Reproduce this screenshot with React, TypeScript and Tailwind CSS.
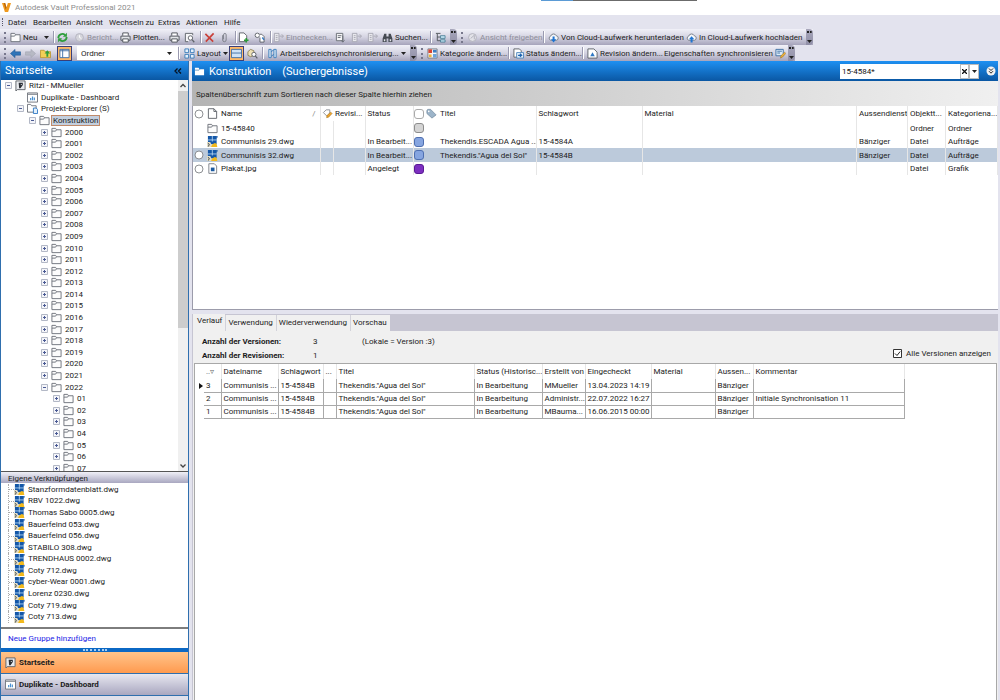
import type { ReactNode } from 'react';
import clsx from 'clsx';

type IconProps = { name: string; className?: string };

const shapes: Record<string, ReactNode> = {
  folder: (
    <>
      <path d="M1 3.500V1.500h4l1 1.500h5v7.500H1z" fill="#fcfcfc" stroke="#6b7078" />
      <path d="M1 4.500h4l1-1.500" fill="none" stroke="#6b7078" />
    </>
  ),
  folderWhite: (
    <>
      <path d="M1 10V2h4l1 1.500h5V10z" fill="#fff" />
      <path d="M1 4.500h4.500l1-1" fill="none" stroke="#4a7fae" strokeWidth=".8" />
    </>
  ),
  refresh: (
    <>
      <path d="M1.500 6.500a4.300 4.300 0 0 1 7.200-3.200M10.500 5.500a4.300 4.300 0 0 1-7.200 3.200" fill="none" stroke="#2f9e3c" strokeWidth="2" />
      <path d="M10.800.8v4.400H6.400zM1.200 11.200V6.800h4.400z" fill="#2f9e3c" />
    </>
  ),
  clock: (
    <>
      <circle cx="6" cy="6" r="4.300" fill="#d5d5dc" stroke="#b4b4be" />
      <path d="M6 3.500V6l2 1" fill="none" stroke="#fff" />
    </>
  ),
  printer: (
    <>
      <path d="M3 4V1h6v3" fill="#fff" stroke="#4d5158" />
      <path d="M3 9H1V4.500h10V9H9" fill="#e4e6ea" stroke="#4d5158" />
      <path d="M3 7.500h6V11H3z" fill="#fff" stroke="#4d5158" />
    </>
  ),
  preview: (
    <>
      <path d="M9.500 3.500v-2h-8v9h3" fill="#f6f6f8" stroke="#5d6168" />
      <circle cx="7" cy="6.500" r="2.400" fill="#fff" stroke="#5d6168" />
      <path d="M8.800 8.300l2.400 2.900" stroke="#5d6168" strokeWidth="1.400" />
    </>
  ),
  cross: <path d="M1.500 2l8.500 8.500M10.500 1.500L2 10.500" stroke="#c9403a" strokeWidth="1.800" fill="none" />,
  clip: (
    <path d="M4 3.500v5.200a1.900 1.900 0 0 0 3.800 0V3a1.400 1.400 0 0 0-2.800 0v5" fill="none" stroke="#777b84" />
  ),
  docPlus: (
    <>
      <path d="M1.500 1h5l3 3v6.500h-8z" fill="#fff" stroke="#5d6168" />
      <path d="M9 6.500v5M6.500 9h5" stroke="#2a9a37" strokeWidth="1.700" />
    </>
  ),
  link: (
    <>
      <circle cx="3.600" cy="3.600" r="2.400" fill="#fff" stroke="#5d6168" />
      <path d="M6 2.500h2.500L11 5v6H6.500V6" fill="#fff" stroke="#5d6168" />
      <path d="M9 6l2 2.500" stroke="#2f78c4" strokeWidth="1.400" />
    </>
  ),
  checkIn: (
    <>
      <path d="M1.500 1.500h5v9h-5zM3 4h2M3 6h2M3 8h2" fill="#e9e9ee" stroke="#a7a7b2" />
      <path d="M7 4.500h4M9.500 2.500l2 2-2 2" fill="none" stroke="#a7a7b2" />
    </>
  ),
  checkOut: (
    <>
      <path d="M1.500 1.500h7v8h-7zM3 4h4M3 6h3" fill="#f4f4f6" stroke="#676b73" />
      <path d="M8.500 4v7M6.500 9l2 2 2-2" fill="none" stroke="#676b73" />
    </>
  ),
  binoculars: (
    <>
      <path d="M2.500 2h2.300v3h2.400V2h2.300l1.800 5v4H7V7H5v4H.7V7z" fill="#454a52" />
      <path d="M2 8h1.600v2H2zM8.400 8H10v2H8.400z" fill="#e6e8ec" />
    </>
  ),
  treeView: (
    <>
      <path d="M1 1.500h5M2.500 2v7.500H6M2.500 5.500H6" fill="none" stroke="#4d5158" />
      <path d="M6 4h5v3H6zM6 8.500h5v2.500H6z" fill="#bfe0ee" stroke="#39758c" strokeWidth=".8" />
    </>
  ),
  cloudDown: (
    <>
      <path d="M3 9a2.400 2.400 0 0 1 0-4.600a3.200 3.200 0 0 1 6-.3a2.500 2.500 0 0 1 .3 4.900z" fill="#f4f6fa" stroke="#747b86" />
      <path d="M5 5h2.200v3H9l-2.900 3.500L3.200 8H5z" fill="#1f74d1" />
    </>
  ),
  cloudUp: (
    <>
      <path d="M3 9a2.400 2.400 0 0 1 0-4.600a3.200 3.200 0 0 1 6-.3a2.500 2.500 0 0 1 .3 4.900z" fill="#f4f6fa" stroke="#747b86" />
      <path d="M5 11.500h2.200V8H9L6.100 4.500 3.200 8H5z" fill="#1f74d1" />
    </>
  ),
  back: <path d="M.5 6L5.500 1.500V4.200h6v3.600h-6v2.700z" fill="#2f74b8" stroke="#1f5791" strokeWidth=".6" />,
  forward: <path d="M11.500 6L6.500 1.500V4.200h-6v3.600h6v2.700z" fill="#b7b9c4" stroke="#a2a4b0" strokeWidth=".6" />,
  folderUp: (
    <>
      <path d="M.5 10.500v-8h4l1 1.500h6v6.500z" fill="#f3cf57" stroke="#b58d22" strokeWidth=".8" />
      <path d="M7 9.500V6H5l3-3.500L11 6H9v3.500z" fill="#2f9e3c" />
    </>
  ),
  panel: <path d="M1 1.500h10v9H1zM4 1.500v9M1 3h10" fill="#fff" stroke="#3f6fa5" />,
  panelTop: (
    <>
      <path d="M.5 1.500h11v9H.5z" fill="#cfe2f6" stroke="#3f6fa5" />
      <path d="M.5 5.500h11" stroke="#3f6fa5" />
    </>
  ),
  tiles: (
    <path d="M1 1h4v4H1zM7 1h4v4H7zM1 7h4v4H1zM7 7h4v4H7z" fill="#e6f1fb" stroke="#3b7dba" />
  ),
  boxSearch: (
    <>
      <path d="M1 4l3-2.500L7.500 3v5L4 9.500 1 8z" fill="#efe1b5" stroke="#7b6d3b" strokeWidth=".8" />
      <circle cx="7.500" cy="7" r="2.300" fill="#fff" stroke="#5d6168" />
      <path d="M9 8.500l2.300 2.700" stroke="#5d6168" strokeWidth="1.300" />
    </>
  ),
  sync: (
    <>
      <path d="M2 1.500h2.500v9H2zM7.500 1.500H10v9H7.500z" fill="#dcebf8" stroke="#3b7dba" />
      <path d="M4.500 4l3-2M4.500 9l3-2" stroke="#3b7dba" />
    </>
  ),
  category: (
    <>
      <path d="M1 1h10v10H1z" fill="#f6f6f8" stroke="#777b84" />
      <path d="M1.500 1.500h4v4h-4z" fill="#d8432f" />
      <path d="M6.500 2h4v3h-4z" fill="#3c7ec2" />
      <path d="M2 7h3v3H2z" fill="#efb23a" />
      <path d="M6.500 6.500h4v4h-4z" fill="#6ba3da" />
    </>
  ),
  state: (
    <>
      <path d="M1 1h6l2 2v7H1z" fill="#fff" stroke="#5d6168" />
      <path d="M4 5h7.500v6H4z" fill="#e8f2fc" stroke="#4e86bd" />
      <path d="M5.500 8h3M7.500 6.300L9.500 8l-2 1.700" fill="none" stroke="#1f63b0" strokeWidth="1.300" />
    </>
  ),
  revision: (
    <>
      <path d="M1 1h6.500L11 4.500V11H1z" fill="#fff" stroke="#5d6168" />
      <path d="M3.500 9L6 4.500 8.500 9z" fill="#2f78c4" />
    </>
  ),
  syncProps: (
    <>
      <path d="M1 1.500h8v7H1z" fill="#dcebf8" stroke="#3b6ea3" />
      <path d="M2.500 3.500h5M2.500 5.500h3" stroke="#3b6ea3" />
      <path d="M6 11l.5-2.500 4-4 1.200 1.500-3.700 4z" fill="#efb23a" stroke="#a2731b" strokeWidth=".6" />
    </>
  ),
  vault: (
    <>
      <path d="M1 1h10v9.500H2.500L1 12z" fill="#e8eaee" stroke="#5d6168" />
      <path d="M4 3h4.500v2.500L6 9H4.500z" fill="#2b2f36" />
      <path d="M6.300 4.500h1.200v1H6.300z" fill="#fff" />
    </>
  ),
  dashboard: (
    <>
      <path d="M.5 1h11v10H.5z" fill="#fff" stroke="#6b7078" />
      <path d="M1 2.500h10" stroke="#6b7078" />
      <path d="M4 9V6.500M6 9V5M8 9V6" stroke="#4a90d0" strokeWidth="1.300" />
    </>
  ),
  explorer: (
    <>
      <path d="M.5 10V1.500H4l1 1.500h5v7z" fill="#fff" stroke="#6b7078" />
      <path d="M7 5.500h3l1.500 1.500v4.500H7z" fill="#e1effb" stroke="#2f78c4" />
    </>
  ),
  doc: <path d="M1.500.8h6l3 3v7.500h-9zM7.500.8v3h3" fill="#fff" stroke="#5d6168" />,
  dwg: (
    <>
      <path d="M1 0h9.500v9H1z" fill="#1457a8" />
      <path d="M5.800 0v6M1 4.300h9.500" stroke="#b9d9f4" strokeWidth=".9" />
      <path d="M0 6.500h3.500L6 12H0z" fill="#e3ddc4" />
      <path d="M4.500 12l1-2.800 3-1.700 2 1 .8 3.500z" fill="#f2b91c" />
      <path d="M10 0l2 .5L10.500 3z" fill="#1457a8" />
      <path d="M1 8l1.500 1L1.500 11.500" fill="none" stroke="#37404c" />
    </>
  ),
  jpg: (
    <>
      <path d="M2 .8h6l2.500 2.500v8H2z" fill="#fff" stroke="#7c8088" />
      <path d="M4.200 5h4v4h-4z" fill="#1b5aa0" />
    </>
  ),
  pencil: (
    <>
      <path d="M1.500 5l3-3h4v3.500l-3 3.500z" fill="#fff" stroke="#8b8f97" />
      <path d="M5 10.500l.6-2.500 3.900-3.500 1.500 1.500-3.800 4z" fill="#efa52f" stroke="#a2731b" strokeWidth=".6" />
    </>
  ),
  tag: (
    <>
      <path d="M1 2.500V6l5.500 5L11 7.500 5 1.500H2z" fill="#9cb4c9" stroke="#6f879c" strokeWidth=".8" />
      <circle cx="3" cy="3.700" r=".9" fill="#fff" />
    </>
  ),
  ring: <circle cx="6" cy="6" r="4.800" fill="#fff" stroke="#77797e" />,
  share: (
    <>
      <circle cx="6" cy="6" r="4.300" fill="#e2e2e8" stroke="#b0b0bb" />
      <path d="M4 7l4-3.500V8" fill="none" stroke="#b0b0bb" />
    </>
  ),
};

const Icon = ({ name, className = 'size-[11px]' }: IconProps) => (
  <svg viewBox="0 0 12 12" aria-hidden="true" className={clsx('shrink-0', className)}>
    {shapes[name]}
  </svg>
);

const Caret = () => (
  <svg viewBox="0 0 5 3" aria-hidden="true" className="h-[3px] w-[5px] shrink-0">
    <path d="M0 0h5L2.500 3z" fill="#222" />
  </svg>
);

const Grip = () => (
  <span className="ml-1 h-[11px] w-[6px] shrink-0 border-l-2 border-dotted border-[#77778c]" />
);

const Separator = ({ className }: { className: string }) => (
  <span className={clsx('flex h-3 shrink-0 items-stretch', className)}>
    <span className="w-px bg-[#9a9ab0]" />
    <span className="w-px bg-white" />
  </span>
);

const Overflow = () => (
  <button
    type="button"
    aria-label="Weitere Schaltflächen"
    className="flex h-4 w-[7px] shrink-0 flex-col items-center justify-between rounded-r-sm bg-linear-to-b from-[#a9a8bc] to-[#8f8ea6] py-[2px]"
  >
    <span className="w-[5px] border-t-2 border-dotted border-[#222]" />
    <Caret />
  </button>
);

type ToolProps = {
  width: string;
  icon?: string;
  label?: string;
  title?: string;
  caret?: boolean;
  disabled?: boolean;
  active?: boolean;
  iconAfter?: boolean;
};

const Tool = ({ width, icon, label, title, caret, disabled, active, iconAfter }: ToolProps) => (
  <button
    type="button"
    disabled={disabled}
    aria-label={title}
    className={clsx(
      'flex h-4 shrink-0 items-center gap-[2px] whitespace-nowrap',
      width,
      disabled && 'text-[#8e8e9a]',
      iconAfter && 'flex-row-reverse justify-end gap-1',
    )}
  >
    {icon && (
      <span
        className={clsx(
          active && 'flex size-[15px] items-center justify-center border border-[#3a3f78] bg-[#fdb866]',
        )}
      >
        <Icon name={icon} />
      </span>
    )}
    {label && <span>{label}</span>}
    {caret && (
      <span className="ml-auto pr-1">
        <Caret />
      </span>
    )}
  </button>
);

const strip = 'flex h-4 shrink-0 items-center bg-linear-to-b from-[#f1f1f8] via-[#d5d4e2] to-[#a6a4bb]';

const menus = [
  ['Datei', 'w-[25px]'],
  ['Bearbeiten', 'w-[43px]'],
  ['Ansicht', 'w-[33px]'],
  ['Wechseln zu', 'w-[49px]'],
  ['Extras', 'w-[28px]'],
  ['Aktionen', 'w-[38px]'],
  ['Hilfe', 'w-[24px]'],
];

const MenuBar = () => (
  <nav className="flex h-[14px] shrink-0 items-center">
    <span className="ml-[2px] h-2 w-[6px] border-l border-dotted border-[#55556a]" />
    {menus.map(([label, width]) => (
      <button key={label} type="button" className={clsx('shrink-0 whitespace-nowrap text-left', width)}>
        {label}
      </button>
    ))}
  </nav>
);

const StandardToolbar = () => (
  <div className="flex h-4 shrink-0">
    <div className={strip}>
      <Grip />
      <Tool width="w-[43px]" icon="folder" label="Neu" caret />
      <Separator className="w-[4px]" />
      <Tool width="w-[17px]" icon="refresh" title="Aktualisieren" />
      <Tool width="w-[46px]" icon="clock" label="Bericht..." disabled />
      <Tool width="w-[49px]" icon="printer" label="Plotten..." />
      <Tool width="w-[15px]" icon="printer" title="Drucken" />
      <Tool width="w-[16px]" icon="preview" title="Vorschau" />
      <Separator className="w-[4px]" />
      <Tool width="w-[15px]" icon="cross" title="Löschen" />
      <Tool width="w-[16px]" icon="clip" title="Anhängen" />
      <Separator className="w-[3px]" />
      <Tool width="w-[16px]" icon="docPlus" title="Dateien hinzufügen" />
      <Tool width="w-[16px]" icon="link" title="Verknüpfung" />
      <Separator className="w-[3px]" />
      <Tool width="w-[62px]" icon="checkIn" label="Einchecken..." disabled />
      <Tool width="w-[16px]" icon="checkOut" title="Auschecken" />
      <Tool width="w-[16px]" icon="checkIn" title="Rückgängig" disabled />
      <Tool width="w-[15px]" icon="checkIn" title="Abrufen" disabled />
      <Tool width="w-[48px]" icon="binoculars" label="Suchen..." />
      <Separator className="w-[5px]" />
      <Tool width="w-[15px]" icon="treeView" title="Struktur" />
      <Overflow />
    </div>
    <div className={strip}>
      <Grip />
      <Tool width="w-[76px]" icon="share" label="Ansicht freigeben" disabled />
      <Separator className="w-[5px]" />
      <Tool width="w-[138px]" icon="cloudDown" label="Von Cloud-Laufwerk herunterladen" />
      <Tool width="w-[120px]" icon="cloudUp" label="In Cloud-Laufwerk hochladen" />
      <Overflow />
    </div>
  </div>
);

const ViewToolbar = () => (
  <div className="flex h-4 shrink-0">
    <div className={strip}>
      <Grip />
      <Tool width="w-[15px]" icon="back" title="Zurück" />
      <Tool width="w-[15px]" icon="forward" title="Vorwärts" disabled />
      <Tool width="w-[17px]" icon="folderUp" title="Übergeordneter Ordner" />
      <Tool width="w-[20px]" icon="panel" title="Navigationsbereich" active />
      <select
        aria-label="Ordnertyp"
        className="h-[14px] w-[90px] shrink-0 appearance-none bg-white pl-1"
      >
        <option>Ordner</option>
      </select>
      <span className="flex h-[14px] w-[11px] items-center bg-white">
        <Caret />
      </span>
      <Separator className="w-[6px]" />
      <Tool width="w-[45px]" icon="tiles" label="Layout" caret />
      <Tool width="w-[18px]" icon="panelTop" title="Vorschaubereich" active />
      <Tool width="w-[15px]" icon="boxSearch" title="Suchordner" />
      <Separator className="w-[5px]" />
      <Tool width="w-[143px]" icon="sync" label="Arbeitsbereichsynchronisierung..." caret />
      <Overflow />
    </div>
    <div className={strip}>
      <Grip />
      <Tool width="w-[81px]" icon="category" label="Kategorie ändern..." />
      <Separator className="w-[5px]" />
      <Tool width="w-[69px]" icon="state" label="Status ändern..." />
      <Separator className="w-[5px]" />
      <Tool width="w-[77px]" icon="revision" label="Revision ändern..." />
      <Tool width="w-[124px]" icon="syncProps" label="Eigenschaften synchronisieren" iconAfter />
      <Overflow />
    </div>
  </div>
);

type Node = { label: string; level: number; icon: string; open?: boolean; selected?: boolean };

const years = Array.from({ length: 23 }, (_, i) => 2000 + i);

const nodes: Node[] = [
  { label: 'Ritzi - MMueller', level: 0, icon: 'vault', open: true },
  { label: 'Duplikate - Dashboard', level: 1, icon: 'dashboard' },
  { label: 'Projekt-Explorer (S)', level: 1, icon: 'explorer', open: true },
  { label: 'Konstruktion', level: 2, icon: 'folder', open: true, selected: true },
  ...years.map((year) => ({ label: `${year}`, level: 3, icon: 'folder', open: year === 2022 })),
  ...['01', '02', '03', '04', '05', '06', '07'].map((label) => ({
    label,
    level: 4,
    icon: 'folder',
    open: false,
  })),
];

const indents = ['pl-1', 'pl-4', 'pl-7', 'pl-10', 'pl-[52px]'];

const Expander = ({ open }: { open?: boolean }) => (
  <svg viewBox="0 0 7 7" aria-hidden="true" className="size-[7px] shrink-0">
    {open !== undefined && (
      <>
        <path d="M.5.5h6v6h-6z" fill="#f4f5f9" stroke="#b3b8c6" />
        <path d={open ? 'M2 3.500h3' : 'M2 3.500h3M3.500 2v3'} stroke="#4a5a94" />
      </>
    )}
  </svg>
);

const Tree = () => (
  <div className="flex h-[391px] shrink-0 overflow-hidden bg-white">
    <ul className="grid h-[394px] flex-1 auto-rows-fr">
      {nodes.map(({ label, level, icon, open, selected }) => (
        <li key={label} className={clsx('flex min-h-0 items-center', indents[level])}>
          <Expander open={open} />
          <Icon name={icon} className="ml-[3px] size-[11px]" />
          <span
            className={clsx(
              'ml-px border px-px leading-[9px]',
              selected ? 'border-[#c08a6a] bg-[#c3cfde]' : 'border-transparent',
            )}
          >
            {label}
          </span>
        </li>
      ))}
    </ul>
    <div className="flex h-full w-[10px] flex-col bg-[#f0f0f0]">
      <svg viewBox="0 0 10 11" aria-hidden="true" className="h-[11px]">
        <path d="M2.500 7L5 4.500 7.500 7" fill="none" stroke="#444" strokeWidth="1.300" />
      </svg>
      <span className="h-[237px] bg-[#cdcdcd]" />
      <svg viewBox="0 0 10 11" aria-hidden="true" className="mt-auto h-[11px]">
        <path d="M2.500 4.500L5 7l2.500-2.500" fill="none" stroke="#444" strokeWidth="1.300" />
      </svg>
    </div>
  </div>
);

const shortcuts = [
  'Stanzformdatenblatt.dwg',
  'RBV 1022.dwg',
  'Thomas Sabo 0005.dwg',
  'Bauerfeind 053.dwg',
  'Bauerfeind 056.dwg',
  'STABILO 308.dwg',
  'TRENDHAUS 0002.dwg',
  'Coty 712.dwg',
  'cyber-Wear 0001.dwg',
  'Lorenz 0230.dwg',
  'Coty 719.dwg',
  'Coty 713.dwg',
];

const Sidebar = () => (
  <aside className="flex w-[189px] shrink-0 flex-col border-x border-[#2f6fae] bg-white">
    <header className="flex h-[19px] shrink-0 items-center justify-between bg-linear-to-b from-[#1e90f2] to-[#0a57a3] pr-[6px] pl-1 text-white">
      <h2 className="text-[11px]">Startseite</h2>
      <svg viewBox="0 0 8 6" aria-hidden="true" className="h-[6px] w-2">
        <path d="M3.500.5L1 3l2.500 2.500M7 .5L4.500 3 7 5.500" fill="none" stroke="#06121f" strokeWidth="1.300" />
      </svg>
    </header>
    <Tree />
    <h3 className="flex h-3 shrink-0 items-center border-t border-[#555] bg-linear-to-b from-[#f0f0f7] to-[#a9a7c0] pt-px pl-[7px]">
      Eigene Verknüpfungen
    </h3>
    <ul className="grid min-h-0 flex-1 auto-rows-fr pt-px pb-1">
      {shortcuts.map((label) => (
        <li key={label} className="ml-[7px] flex min-h-0 items-center border-l border-dotted border-[#aaa]">
          <span className="w-[5px] border-t border-dotted border-[#aaa]" />
          <Icon name="dwg" />
          <span className="ml-[3px] leading-[10px]">{label}</span>
        </li>
      ))}
    </ul>
    <div className="flex h-[21px] shrink-0 items-center border-t-2 border-[#7d7d7d] pb-px pl-[7px]">
      <a href="#neu" className="text-[#1a1ae6]">
        Neue Gruppe hinzufügen
      </a>
    </div>
    <div className="flex h-1 shrink-0 items-center justify-center bg-[#0b68c4]">
      <span className="w-6 border-t-2 border-dotted border-[#a9cdf0]" />
    </div>
    <button
      type="button"
      className="flex h-[21px] shrink-0 items-center gap-[3px] bg-linear-to-b from-[#ffc48a] to-[#ff9a4e] pl-1 font-bold"
    >
      <Icon name="vault" />
      Startseite
    </button>
    <button
      type="button"
      className="flex h-[22px] shrink-0 items-center gap-[3px] border-t border-[#2f6fae] bg-linear-to-b from-[#e8e8f0] to-[#a9a7c0] pl-1 font-bold"
    >
      <Icon name="dashboard" />
      Duplikate - Dashboard
    </button>
    <div className="h-[5px] shrink-0 border-t border-[#2f6fae] bg-[#e0e0ea]" />
  </aside>
);

type Entry = {
  name: string;
  icon: string;
  ring: boolean;
  status: string;
  swatch: string;
  titel: string;
  key: string;
  rep: string;
  type: string;
  category: string;
  selected?: boolean;
};

const entries: Entry[] = [
  { name: '15-45840', icon: 'folder', ring: false, status: '', swatch: 'border-[#8d8d8d] bg-[#d4d4d4]', titel: '', key: '', rep: '', type: 'Ordner', category: 'Ordner' },
  { name: 'Communisis 29.dwg', icon: 'dwg', ring: false, status: 'In Bearbeit...', swatch: 'border-[#4f6fb0] bg-[#86a5e0]', titel: 'Thekendis.ESCADA Agua ...', key: '15-4584A', rep: 'Bänziger', type: 'Datei', category: 'Aufträge' },
  { name: 'Communisis 32.dwg', icon: 'dwg', ring: true, status: 'In Bearbeit...', swatch: 'border-[#4f6fb0] bg-[#86a5e0]', titel: 'Thekendis."Agua del Sol"', key: '15-4584B', rep: 'Bänziger', type: 'Datei', category: 'Aufträge', selected: true },
  { name: 'Plakat.jpg', icon: 'jpg', ring: true, status: 'Angelegt', swatch: 'border-[#5a1a94] bg-[#7d2fc0]', titel: '', key: '', rep: '', type: 'Datei', category: 'Grafik' },
];

const cell = 'overflow-hidden border-r border-[#e6e6e6] p-0 pl-[2px] text-left font-normal whitespace-nowrap';
const iconCell = 'p-0 pl-px';
const swatchShape = 'block size-[10px] rounded-[3px] border';

const FileTable = () => (
  <table className="w-full table-fixed border-collapse">
    <colgroup>
      <col className="w-[13px]" />
      <col className="w-[13px]" />
      <col className="w-[101px]" />
      <col className="w-[13px]" />
      <col className="w-[32px]" />
      <col className="w-[48px]" />
      <col className="w-[12px]" />
      <col className="w-[13px]" />
      <col className="w-[98px]" />
      <col className="w-[106px]" />
      <col />
      <col className="w-[51px]" />
      <col className="w-[38px]" />
      <col className="w-[52px]" />
    </colgroup>
    <thead>
      <tr className="h-[15px]">
        <th className={iconCell}><Icon name="ring" className="size-[10px]" /></th>
        <th className={iconCell}><Icon name="doc" /></th>
        <th className={cell}>
          <span className="flex justify-between pr-1">
            Name<span className="text-[#888]">/</span>
          </span>
        </th>
        <th className={iconCell}><Icon name="pencil" /></th>
        <th className={cell}>Revisi...</th>
        <th className={cell}>Status</th>
        <th className="p-0"><span className={clsx(swatchShape, 'border-[#aaa] bg-white')} /></th>
        <th className={iconCell}><Icon name="tag" /></th>
        <th className={cell}>Titel</th>
        <th className={cell}>Schlagwort</th>
        <th className={cell}>Material</th>
        <th className={cell}>Aussendienst</th>
        <th className={cell}>Objektt...</th>
        <th className={cell}>Kategoriena...</th>
      </tr>
    </thead>
    <tbody>
      {entries.map((entry) => (
        <tr key={entry.name} className={clsx('h-[13px] odd:h-[14px]', entry.selected && 'bg-[#bccadb]')}>
          <td className={iconCell}>{entry.ring && <Icon name="ring" className="size-[10px]" />}</td>
          <td className={iconCell}><Icon name={entry.icon} /></td>
          <td className={cell}>{entry.name}</td>
          <td className={cell} />
          <td className={cell} />
          <td className={cell}>{entry.status}</td>
          <td className="p-0"><span className={clsx(swatchShape, entry.swatch)} /></td>
          <td className={iconCell} />
          <td className={cell}>{entry.titel}</td>
          <td className={cell}>{entry.key}</td>
          <td className={cell} />
          <td className={cell}>{entry.rep}</td>
          <td className={cell}>{entry.type}</td>
          <td className={cell}>{entry.category}</td>
        </tr>
      ))}
    </tbody>
  </table>
);

const versions = [
  ['3', 'Communisis ...', '15-4584B', '', 'Thekendis."Agua del Sol"', 'In Bearbeitung', 'MMueller', '13.04.2023 14:19', '', 'Bänziger', ''],
  ['2', 'Communisis ...', '15-4584B', '', 'Thekendis."Agua del Sol"', 'In Bearbeitung', 'Administr...', '22.07.2022 16:27', '', 'Bänziger', 'Initiale Synchronisation 11'],
  ['1', 'Communisis ...', '15-4584B', '', 'Thekendis."Agua del Sol"', 'In Bearbeitung', 'MBauma...', '16.06.2015 00:00', '', 'Bänziger', ''],
];

const versionHeads = ['Dateiname', 'Schlagwort', '...', 'Titel', 'Status (Historisc...', 'Erstellt von', 'Eingecheckt', 'Material', 'Aussen...', 'Kommentar'];

const VersionTable = () => (
  <table className="w-[709px] table-fixed border-collapse">
    <colgroup>
      <col className="w-[9px]" />
      <col className="w-[17px]" />
      <col className="w-[57px]" />
      <col className="w-[45px]" />
      <col className="w-[13px]" />
      <col className="w-[138px]" />
      <col className="w-[68px]" />
      <col className="w-[43px]" />
      <col className="w-[66px]" />
      <col className="w-[64px]" />
      <col className="w-[38px]" />
      <col className="w-[151px]" />
    </colgroup>
    <thead>
      <tr className="h-[15px]">
        <th className="p-0" />
        <th className="border-r border-[#e6e6e6] p-0 pl-[2px] text-left font-normal text-[#666]">..▿</th>
        {versionHeads.map((head) => (
          <th key={head} className={cell}>{head}</th>
        ))}
      </tr>
    </thead>
    <tbody>
      {versions.map((row, i) => (
        <tr key={row[0]} className="h-[13px]">
          <td className="p-0">
            {i === 0 && (
              <svg viewBox="0 0 4 6" aria-hidden="true" className="ml-1 h-[6px] w-1">
                <path d="M0 0l4 3-4 3z" fill="#111" />
              </svg>
            )}
          </td>
          {row.map((value, j) => (
            <td key={j} className="overflow-hidden border-r border-b border-[#a9a9a9] p-0 pl-[2px] whitespace-nowrap">
              {value}
            </td>
          ))}
        </tr>
      ))}
    </tbody>
  </table>
);

const tabs = ['Verlauf', 'Verwendung', 'Wiederverwendung', 'Vorschau'];

const Details = () => (
  <section className="mt-1 flex min-h-0 flex-1 flex-col border-l border-[#c6c5d2] bg-[#f0f0f0]">
    <div role="tablist" className="flex h-[17px] shrink-0 items-end bg-[#c6c5d2]">
      {tabs.map((tab, i) => (
        <button
          key={tab}
          type="button"
          role="tab"
          aria-selected={i === 0}
          className={clsx(
            'bg-[#f0f0f0] pr-[3px]',
            i === 0 ? 'h-[17px] pb-1 pl-1' : 'h-4 border-l border-[#d2d2da] pb-px pl-[2px]',
          )}
        >
          {tab}
        </button>
      ))}
    </div>
    <div className="flex h-8 shrink-0 items-end justify-between pr-[7px] pl-[9px]">
      <dl className="grid grid-cols-[111px_49px_auto] leading-[14px]">
        <dt className="font-bold">Anzahl der Versionen:</dt>
        <dd>3</dd>
        <dd>(Lokale = Version :3)</dd>
        <dt className="font-bold">Anzahl der Revisionen:</dt>
        <dd>1</dd>
      </dl>
      <label className="flex items-center gap-1 pb-1">
        <input
          type="checkbox"
          defaultChecked
          className="peer sr-only"
        />
        <svg viewBox="0 0 9 9" aria-hidden="true" className="size-[9px]">
          <path d="M.5.5h8v8h-8z" fill="#fff" stroke="#333" />
          <path d="M2 4.500l2 2L7.200 2.500" fill="none" stroke="#222" />
        </svg>
        Alle Versionen anzeigen
      </label>
    </div>
    <div className="mr-px ml-px min-h-0 flex-1 border-t border-r border-l border-[#a8a8a8] bg-white">
      <VersionTable />
    </div>
  </section>
);

const Content = () => (
  <main className="mr-[2px] ml-[3px] flex min-w-0 flex-1 flex-col">
    <header className="flex h-5 shrink-0 items-center bg-linear-to-b from-[#1e90f2] to-[#0a57a3] pr-[2px] pl-[2px] text-white">
      <Icon name="folderWhite" />
      <h1 className="ml-1 flex-1 text-[11px] whitespace-pre">Konstruktion    (Suchergebnisse)</h1>
      <input
        aria-label="Suche"
        defaultValue="15-4584*"
        className="h-[15px] w-[120px] bg-white pl-[2px] text-[#111]"
      />
      <button type="button" aria-label="Suche löschen" className="flex h-[15px] w-[9px] items-center justify-center border border-[#bbb] bg-white">
        <svg viewBox="0 0 5 5" className="size-[5px]"><path d="M0 0l5 5M5 0L0 5" stroke="#111" strokeWidth="1.300" /></svg>
      </button>
      <button type="button" aria-label="Suchverlauf" className="flex h-[15px] w-[10px] items-center justify-center border border-[#bbb] bg-white">
        <Caret />
      </button>
      <svg viewBox="0 0 10 10" aria-hidden="true" className="ml-[7px] size-[10px]">
        <circle cx="5" cy="5" r="4.500" fill="#f2f2f2" />
        <path d="M3 2.500L5 4.500l2-2M3 5.200l2 2 2-2" fill="none" stroke="#222" />
      </svg>
    </header>
    <div className="flex h-[25px] shrink-0 items-center bg-linear-to-r from-[#b4b4b4] to-[#f0f0f0] pt-px pl-1">
      Spaltenüberschrift zum Sortieren nach dieser Spalte hierhin ziehen
    </div>
    <div className="h-[204px] shrink-0 border-b border-l border-[#9c9cab] bg-white">
      <FileTable />
    </div>
    <Details />
  </main>
);

const App = () => (
  <div className="flex h-screen flex-col overflow-hidden bg-[#e3e3ee] font-['Roboto','Open_Sans',sans-serif] text-[8px] leading-[11px] text-[#1c1c1c]">
    <div className="flex h-[15px] shrink-0 items-start bg-white">
      <svg viewBox="0 0 10 10" aria-hidden="true" className="mt-[3px] ml-[2px] size-[9px]">
        <path d="M0 0h3.500L5 5l1.500-5H10L6.800 10H3.200z" fill="#f09a1f" />
        <path d="M3.500 0L5 5l-1 2.500L2 0z" fill="#b8660c" />
      </svg>
      <span className="mt-[2px] ml-1 text-[#8d8d8d]">Autodesk Vault Professional 2021</span>
      <span className="ml-auto flex h-px w-[156px]">
        <span className="w-8 bg-[#5b9bd5]" />
        <span className="flex-1 bg-[#6b6b6b]" />
      </span>
      <span className="w-[303px]" />
    </div>
    <MenuBar />
    <StandardToolbar />
    <ViewToolbar />
    <div className="flex min-h-0 flex-1">
      <Sidebar />
      <Content />
    </div>
  </div>
);

export default App;
